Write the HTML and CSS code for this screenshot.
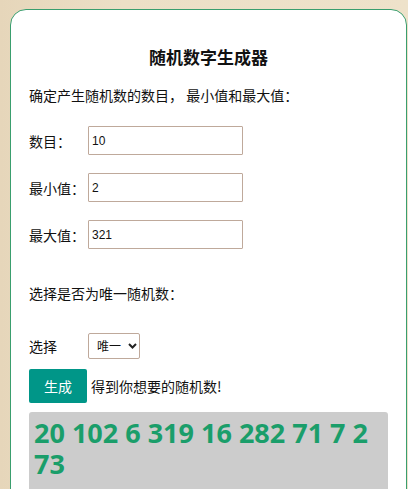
FILE: index.html
```html
<!DOCTYPE html>
<html lang="zh">
<head>
<meta charset="utf-8">
<title>随机数字生成器</title>
<link rel="stylesheet" href="styles.css">
</head>
<body>
<div class="card">
  <h3 class="title">随机数字生成器</h3>
  <p class="intro">确定产生随机数的数目， 最小值和最大值：</p>
  <div class="field">
    <label class="label">数目：</label>
    <input class="input" type="text" value="10">
  </div>
  <div class="field">
    <label class="label">最小值：</label>
    <input class="input" type="text" value="2">
  </div>
  <div class="field">
    <label class="label">最大值：</label>
    <input class="input" type="text" value="321">
  </div>
  <p class="intro unique">选择是否为唯一随机数：</p>
  <div class="field select-row">
    <label class="label">选择</label>
    <div class="select">
      <span class="select-text">唯一</span>
      <svg class="chevron" width="9" height="6" viewBox="0 0 9 6"><path d="M1 1 L4.5 4.5 L8 1" fill="none" stroke="#222" stroke-width="2"/></svg>
    </div>
  </div>
  <div class="action">
    <button class="btn">生成</button>
    <span class="hint">得到你想要的随机数!</span>
  </div>
  <div class="result">20 102 6 319 16 282 71 7 2 73</div>
</div>
</body>
</html>
```

FILE: styles.css
```css
html, body {
  margin: 0;
  height: 100%;
}
body {
  padding: 9px 1px 0 10px;
  box-sizing: border-box;
  overflow: hidden;
  font-family: "Noto Sans CJK SC", "Noto Sans", sans-serif;
  color: #111;
  background: linear-gradient(90deg, #e6d6ba 0%, #ecdfc6 30%, #eee2ca 100%);
}
.card {
  background: #fff;
  border: 1px solid #3a9e6e;
  border-radius: 16px;
  padding: 35px 18px 20px 18px;
  min-height: 520px;
}
.title {
  margin: 0;
  font-size: 17px;
  line-height: 24px;
  font-weight: 700;
  text-align: center;
}
.intro {
  margin: 16px 0 0 0;
  font-size: 14px;
  line-height: 20px;
}
.field {
  display: flex;
  align-items: center;
  margin-top: 18px;
}
.intro + .field {
  margin-top: 21px;
}
.label {
  width: 59px;
  font-size: 14px;
  line-height: 20px;
}
.input {
  box-sizing: border-box;
  width: 155px;
  height: 29px;
  border: 1px solid #bfa99b;
  border-radius: 1px;
  padding: 0 3px;
  font-family: "Liberation Sans", Arial, sans-serif;
  font-size: 12px;
  color: #111;
  outline: none;
}
.intro.unique {
  margin-top: 34px;
}
.field.select-row {
  margin-top: 30px;
}
.select {
  box-sizing: border-box;
  width: 52px;
  height: 26px;
  border: 1px solid #bfa99b;
  border-radius: 2px;
  display: flex;
  align-items: center;
  padding: 0 0 0 8px;
  gap: 7px;
}
.select-text {
  font-size: 12px;
  line-height: 16px;
}
.chevron {
  display: block;
}
.action {
  display: flex;
  align-items: center;
  gap: 4px;
  margin-top: 10px;
}
.btn {
  width: 58px;
  height: 34px;
  border: none;
  border-radius: 2px;
  background: #009688;
  color: #fff;
  font-family: "Noto Sans CJK SC", "Noto Sans", sans-serif;
  font-size: 14px;
  padding: 0;
}
.hint {
  font-size: 14px;
  line-height: 20px;
}
.result {
  margin-top: 9px;
  background: #cccccc;
  border-radius: 3px;
  padding: 5px 6px 14px 5px;
  font-family: "Open Sans", "Noto Sans", sans-serif;
  font-weight: 700;
  font-size: 27px;
  line-height: 31px;
  color: #1a9e6a;
}
```
